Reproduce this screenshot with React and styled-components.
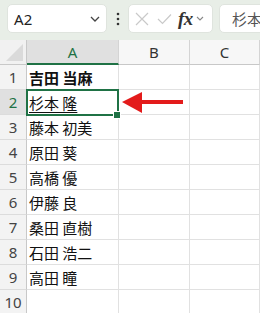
import React from 'react';
import styled, { createGlobalStyle } from 'styled-components';

const Global = createGlobalStyle`
  html, body { margin: 0; padding: 0; background: #fff; overflow: hidden; }
  body { font-family: "Noto Sans", "Noto Sans CJK JP", sans-serif; }
`;

const Page = styled.div`
  position: relative;
  width: 260px;
  height: 313px;
  overflow: hidden;
  background: #fff;
`;

const Toolbar = styled.div`
  height: 40px;
  box-sizing: border-box;
  background: #e8eee7;
  display: flex;
  align-items: flex-start;
  padding: 4px 0 0 7px;
  overflow: hidden;
`;

const Box = styled.div`
  box-sizing: border-box;
  height: 29px;
  width: ${(p) => p.$w};
  flex: ${(p) => (p.$grow ? '1 0 auto' : '0 0 auto')};
  margin-right: ${(p) => p.$mr || '0px'};
  background: #fff;
  border: 1px solid #dfe4de;
  border-radius: 5px;
  display: flex;
  align-items: center;
  overflow: hidden;
`;

const NameText = styled.span`
  font-size: 15px;
  color: #222;
  margin-left: 6px;
  flex: 1;
  letter-spacing: 0.2px;
`;

const Dots = styled.div`
  flex: 0 0 21px;
  width: 21px;
  height: 29px;
  display: flex;
  align-items: center;
  justify-content: center;
`;

const FxText = styled.span`
  font-family: "Liberation Serif", "DejaVu Serif", serif;
  font-style: italic;
  font-weight: bold;
  font-size: 19px;
  color: #333;
  margin-left: 6px;
  line-height: 1;
  letter-spacing: -0.5px;
`;

const ContentText = styled.span`
  font-family: "Noto Sans CJK JP", sans-serif;
  font-size: 15px;
  color: #555;
  margin-left: 12px;
  white-space: nowrap;
`;

const Row = styled.div`
  display: grid;
  grid-template-columns: 27px 92px 71px 1fr;
  height: 25px;
`;

const Corner = styled.div`
  position: relative;
  box-sizing: border-box;
  background: #f1f1f1;
  border-right: 1px solid #c8c8c8;
  border-bottom: 1px solid #c8c8c8;
`;

const ColHead = styled.div`
  box-sizing: border-box;
  display: flex;
  align-items: center;
  justify-content: center;
  font-size: 15px;
  background: ${(p) => (p.$sel ? '#e0e0e0' : '#f7f7f7')};
  color: ${(p) => (p.$sel ? '#1f7245' : '#333')};
  border-right: 1px solid #d4d4d4;
  border-bottom: ${(p) => (p.$sel ? '2px solid #1f7245' : '1px solid #c8c8c8')};
`;

const RowHead = styled.div`
  box-sizing: border-box;
  display: flex;
  align-items: center;
  justify-content: center;
  font-size: 15px;
  background: ${(p) => (p.$sel ? '#e0e0e0' : '#f3f3f3')};
  color: ${(p) => (p.$sel ? '#1f7245' : '#444')};
  border-right: 1px solid #c8c8c8;
  border-bottom: 1px solid #dcdcdc;
`;

const Cell = styled.div`
  box-sizing: border-box;
  display: flex;
  align-items: center;
  padding-left: 2px;
  font-family: "Noto Sans CJK JP", sans-serif;
  font-size: 15px;
  color: #111;
  white-space: nowrap;
  font-weight: ${(p) => (p.$bold ? 700 : 400)};
  text-decoration: ${(p) => (p.$ul ? 'underline' : 'none')};
  text-underline-offset: 3px;
  border-right: 1px solid #e1e1e1;
  border-bottom: 1px solid #e1e1e1;
`;

const Selection = styled.div`
  position: absolute;
  left: 26px;
  top: 89px;
  width: 93px;
  height: 27px;
  box-sizing: border-box;
  border: 2px solid #1f7245;
  pointer-events: none;
`;

const Handle = styled.div`
  position: absolute;
  left: 114px;
  top: 112px;
  width: 6px;
  height: 6px;
  background: #1f7245;
  outline: 1px solid #fff;
`;

const Arrow = styled.svg`
  position: absolute;
  left: 120px;
  top: 90px;
`;

const names = [
  { t: '吉田 当麻', bold: true },
  { t: '杉本 隆', ul: true },
  { t: '藤本 初美' },
  { t: '原田 葵' },
  { t: '高橋 優' },
  { t: '伊藤 良' },
  { t: '桑田 直樹' },
  { t: '石田 浩二' },
  { t: '高田 瞳' },
  { t: '' },
];

export default function App() {
  return (
    <Page>
      <Global />
      <Toolbar>
        <Box $w="100px">
          <NameText>A2</NameText>
          <svg width="10" height="6" viewBox="0 0 10 6" style={{ marginRight: 6 }}>
            <path d="M1 1 L5 5 L9 1" fill="none" stroke="#444" strokeWidth="1.3" />
          </svg>
        </Box>
        <Dots>
          <svg width="4" height="14" viewBox="0 0 4 14">
            <circle cx="2" cy="2" r="1.3" fill="#333" />
            <circle cx="2" cy="7" r="1.3" fill="#333" />
            <circle cx="2" cy="12" r="1.3" fill="#333" />
          </svg>
        </Dots>
        <Box $w="85px" $mr="6px">
          <svg width="14" height="14" viewBox="0 0 14 14" style={{ marginLeft: 6 }}>
            <path d="M1 1 L13 13 M13 1 L1 13" stroke="#c9c9c9" strokeWidth="1.2" fill="none" />
          </svg>
          <svg width="15" height="12" viewBox="0 0 15 12" style={{ marginLeft: 8 }}>
            <path d="M1 6 L5.5 10.5 L14 1.5" stroke="#c9c9c9" strokeWidth="1.2" fill="none" />
          </svg>
          <FxText>fx</FxText>
          <svg width="8" height="5" viewBox="0 0 8 5" style={{ marginLeft: 3 }}>
            <path d="M1 1 L4 4 L7 1" fill="none" stroke="#888" strokeWidth="1.1" />
          </svg>
        </Box>
        <Box $grow $w="60px">
          <ContentText>杉本 隆</ContentText>
        </Box>
      </Toolbar>

      <Row>
        <Corner>
          <svg width="17" height="17" viewBox="0 0 17 17" style={{ position: 'absolute', right: 3, bottom: 3 }}>
            <polygon points="17,0 17,17 0,17" fill="#dadada" />
          </svg>
        </Corner>
        <ColHead $sel>A</ColHead>
        <ColHead>B</ColHead>
        <ColHead>C</ColHead>
      </Row>

      {names.map((n, i) => (
        <Row key={i}>
          <RowHead $sel={i === 1}>{i + 1}</RowHead>
          <Cell $bold={n.bold} $ul={n.ul}>{n.t}</Cell>
          <Cell />
          <Cell />
        </Row>
      ))}

      <Selection />
      <Handle />
      <Arrow width="70" height="26" viewBox="0 0 70 26">
        <polygon points="2,12 22,2 22,23" fill="#e31b1b" />
        <rect x="21" y="10" width="42" height="4" fill="#e31b1b" />
      </Arrow>
    </Page>
  );
}
